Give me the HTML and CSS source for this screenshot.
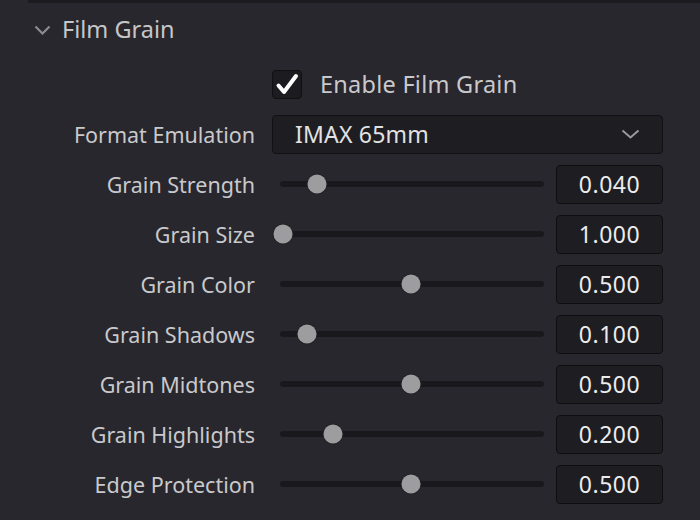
FILE: index.html
```html
<!DOCTYPE html>
<html>
<head>
<meta charset="utf-8">
<link rel="stylesheet" href="styles.css">
</head>
<body>
<div class="topbar"></div>
<div class="header">
  <svg class="hchev" width="17" height="10" viewBox="0 0 17 10"><path d="M1.5 1.5 L8.5 8.5 L15.5 1.5" fill="none" stroke="#8b8b8f" stroke-width="2.2"/></svg>
  <span class="title">Film Grain</span>
</div>
<div class="grid">
  <div class="label"></div>
  <div class="control">
    <span class="checkbox"><svg width="30" height="29" viewBox="0 0 30 29"><path d="M6.5 15.5 L12 22 L24 6" fill="none" stroke="#ffffff" stroke-width="4" stroke-linecap="round" stroke-linejoin="round"/></svg></span>
    <span class="cblabel">Enable Film Grain</span>
  </div>

  <div class="label">Format Emulation</div>
  <div class="control">
    <div class="dropdown"><span>IMAX 65mm</span><svg width="19" height="10" viewBox="0 0 19 10"><path d="M1.5 1.5 L9.5 8.5 L17.5 1.5" fill="none" stroke="#9a9a9e" stroke-width="2"/></svg></div>
  </div>

  <div class="label">Grain Strength</div>
  <div class="control"><div class="slider"><div class="track"><div class="knob" style="left: 13.9%"></div></div></div><div class="value">0.040</div></div>

  <div class="label">Grain Size</div>
  <div class="control"><div class="slider"><div class="track"><div class="knob" style="left: 1%"></div></div></div><div class="value">1.000</div></div>

  <div class="label">Grain Color</div>
  <div class="control"><div class="slider"><div class="track"><div class="knob" style="left: 49.5%"></div></div></div><div class="value">0.500</div></div>

  <div class="label">Grain Shadows</div>
  <div class="control"><div class="slider"><div class="track"><div class="knob" style="left: 10.1%"></div></div></div><div class="value">0.100</div></div>

  <div class="label">Grain Midtones</div>
  <div class="control"><div class="slider"><div class="track"><div class="knob" style="left: 49.5%"></div></div></div><div class="value">0.500</div></div>

  <div class="label">Grain Highlights</div>
  <div class="control"><div class="slider"><div class="track"><div class="knob" style="left: 20%"></div></div></div><div class="value">0.200</div></div>

  <div class="label">Edge Protection</div>
  <div class="control"><div class="slider"><div class="track"><div class="knob" style="left: 49.5%"></div></div></div><div class="value">0.500</div></div>
</div>
</body>
</html>
```
FILE: styles.css
```css
html, body {
  margin: 0;
  padding: 0;
  background: #28272d;
  font-family: "Noto Sans", "Open Sans", sans-serif;
  color: #c9c9cc;
  width: 700px;
  height: 520px;
  overflow: hidden;
}
.topbar {
  margin-left: 28px;
  height: 3px;
  background: #1c1b20;
}
.header {
  display: flex;
  align-items: center;
  height: 52px;
  margin-bottom: 4px;
  padding-left: 34px;
}
.hchev {
  margin-top: 2px;
}
.title {
  margin-left: 11px;
  font-size: 23.5px;
  color: #c6c6c9;
}
.grid {
  display: grid;
  grid-template-columns: 255px 391px;
  column-gap: 17px;
  grid-auto-rows: 50px;
}
.label {
  display: flex;
  align-items: center;
  justify-content: flex-end;
  font-size: 21.5px;
  color: #c9c9cc;
  white-space: nowrap;
}
.control {
  display: flex;
  align-items: center;
}
.checkbox {
  box-sizing: border-box;
  width: 30px;
  height: 29px;
  background: #1c1b20;
  border: 1px solid #101013;
  border-radius: 4px;
  display: flex;
}
.checkbox svg {
  margin: -1px;
}
.cblabel {
  margin-left: 18px;
  font-size: 23.5px;
  letter-spacing: 0.25px;
  color: #c9c9cc;
}
.dropdown {
  box-sizing: border-box;
  width: 392px;
  height: 39px;
  background: #1e1d21;
  border: 1px solid #111013;
  border-radius: 4px;
  display: flex;
  align-items: center;
  justify-content: space-between;
  padding: 0 22px 0 22px;
  font-size: 23px;
  letter-spacing: 0.2px;
  color: #e2e2e4;
}
.slider {
  width: 280px;
  padding: 0 8px;
  box-sizing: border-box;
}
.track {
  position: relative;
  height: 6px;
  border-radius: 3px;
  background: #19181c;
}
.knob {
  position: absolute;
  top: 50%;
  width: 19px;
  height: 19px;
  border-radius: 50%;
  background: #9d9d9f;
  box-shadow: 0 0 0 1px #222126;
  transform: translate(-50%, -50%);
}
.value {
  box-sizing: border-box;
  margin-left: auto;
  width: 107px;
  height: 39px;
  background: #1e1d21;
  border: 1.5px solid #0e0e10;
  border-radius: 4px;
  display: flex;
  align-items: center;
  justify-content: center;
  font-size: 23px;
  letter-spacing: 0.5px;
  color: #ececee;
}
```
